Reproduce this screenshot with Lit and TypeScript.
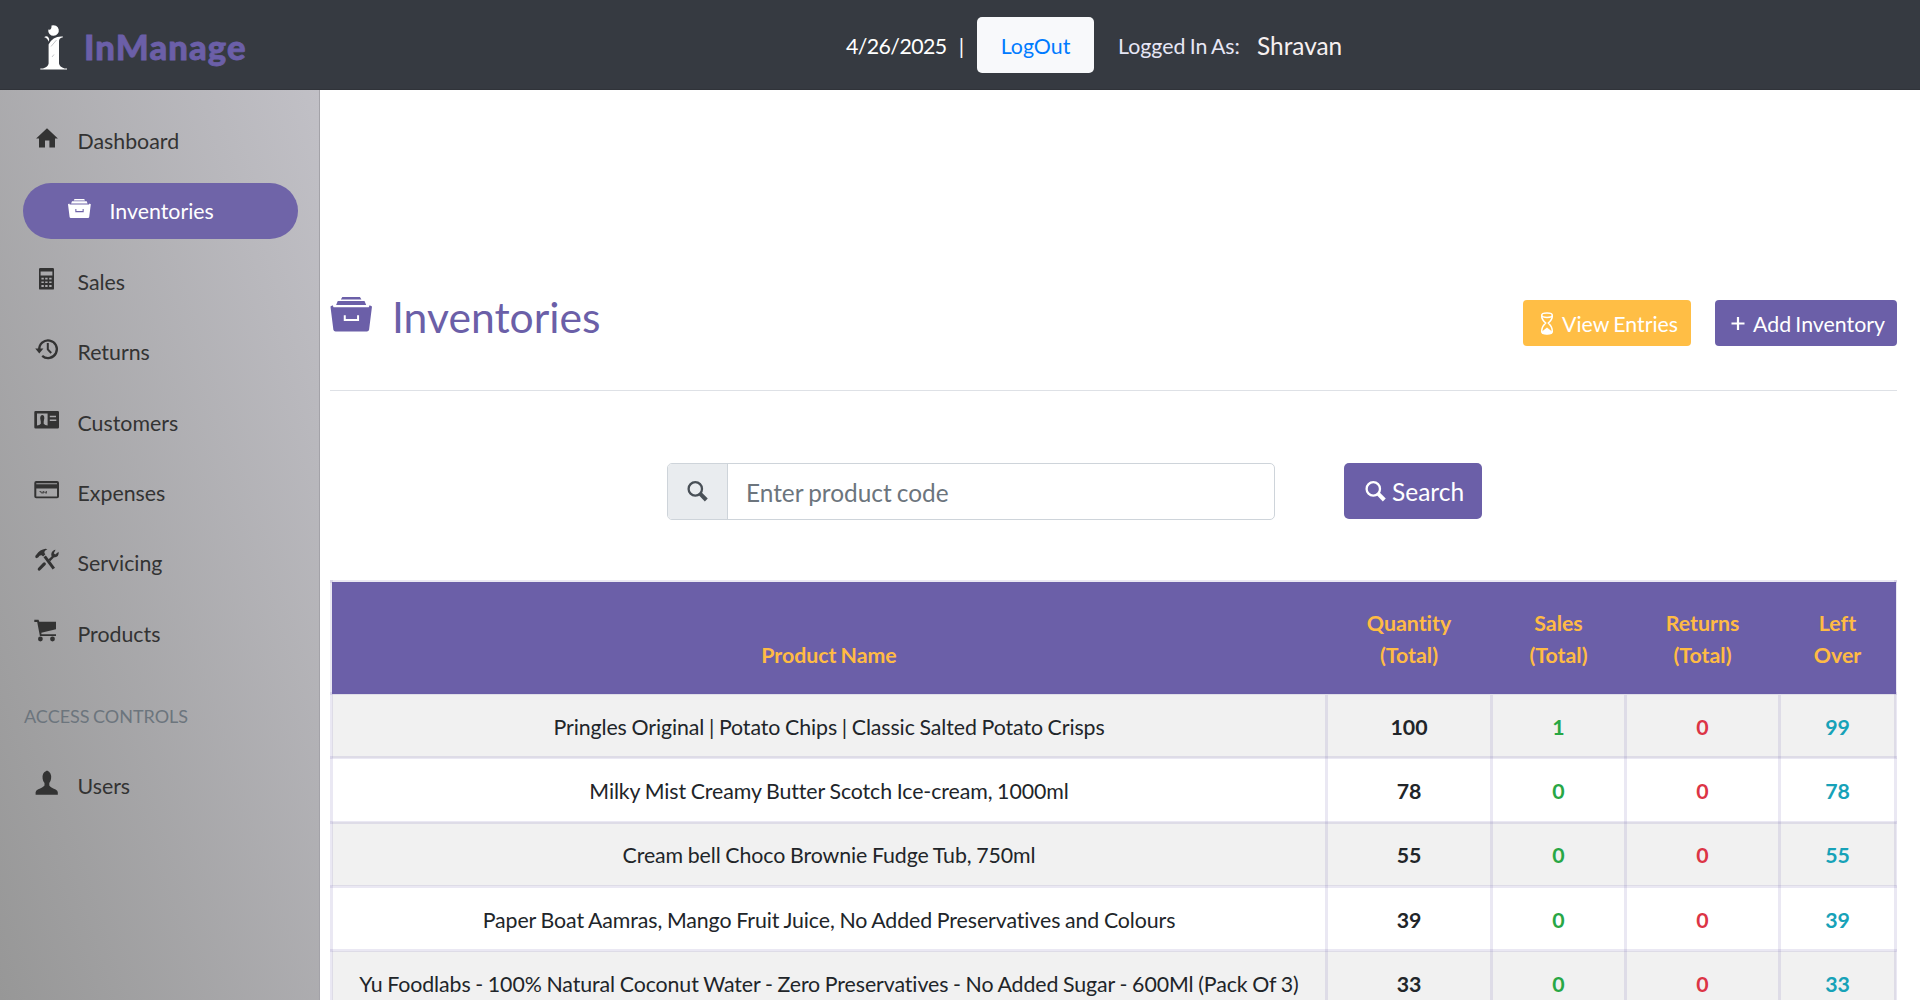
import { LitElement, html, svg, css, type TemplateResult } from "lit";
import { customElement, property } from "lit/decorators.js";

const icons: Record<string, TemplateResult> = {
  home: svg`<path d="M14 5.2 24.9 15.6H22V24.4H16.4V17.4H12V24.4H6V15.6H3.1Z"/>`,
  basket: svg`<path d="M9.5 6H19.2L20 7.4H8.7ZM7 8.3H21.7L22.6 10.4H6.1ZM3 11.3 4.2 10.5 4.7 11.6H24L24.5 10.5 25.8 11.3 24.2 24Q24 25 23 25H5.8Q4.8 25 4.6 24ZM10.3 16V19.2H18.7V16H17.6V18.1H11.4V16Z" fill-rule="evenodd"/>`,
  calc: svg`<path fill-rule="evenodd" d="M7.2 4H19.8Q21 4 21 5.2V24.4Q21 25.6 19.8 25.6H7.2Q6 25.6 6 24.4V5.2Q6 4 7.2 4ZM7.6 7.6V11.4H19.4V7.6ZM8.4 13.8V15.4H10.8V13.8ZM12.2 13.8V15.4H14.6V13.8ZM16.2 13.8V15.4H18.6V13.8ZM8.4 17.4V19H10.8V17.4ZM12.2 17.4V19H14.6V17.4ZM16.2 17.4V19H18.6V17.4ZM8.4 21V23H10.8V21ZM12.2 21V23H14.6V21ZM16.2 21V23H18.6V21Z"/>`,
  history: svg`<path fill="none" stroke="currentColor" stroke-width="2.3" d="M6.3 16A8.8 8.8 0 1 1 9.2 21.8"/><path d="M2.2 14.6H10.4L6.3 19.4Z"/><path fill="none" stroke="currentColor" stroke-width="2" d="M14.8 9V15.4L18.2 19"/>`,
  idcard: svg`<path fill-rule="evenodd" d="M2.5 6H24.8Q26 6 26 7.2V22.3Q26 23.5 24.8 23.5H2.5Q1.3 23.5 1.3 22.3V7.2Q1.3 6 2.5 6ZM4 8.6V20.6Q6.600 20.400 7.800 18.800L7.800 16.800Q6.400 13 7.600 11 9.300 9 11 11 12 13 10.700 16.800V18.800Q11.800 20.400 14.600 20.600V8.600ZM16.800 10.800V12.200H23V10.800ZM16.800 14.600V16H23.300V14.600Z"/>`,
  card: svg`<path fill-rule="evenodd" d="M3.200 6H24Q26 6 26 8V21.500Q26 23.300 24 23.300H3.200Q1.300 23.300 1.300 21.500V8Q1.300 6 3.200 6ZM3.300 8.200V9.200H24V8.200ZM3.300 13.400V21.500H24V13.400Z"/><path d="M6 16H8L9 17.500 10 16H11L12 17.500 13 16H14V18.400H12.500L11.500 17.400 10.500 18.400H8.500L7.500 17.400Z" opacity=".75"/>`,
  tools: svg`<path d="M2.200 12.200Q2 10.500 3.500 9.400 6.800 4.600 12.600 3.700L14.400 4.300Q11.200 5.600 11.400 8L12.400 9.200 10.200 11.600 8.600 10.200Q6.600 9.800 5.400 12.200L3.600 13.200Z"/><path d="M11.700 11.300 20.800 23.600" stroke="currentColor" stroke-width="3"/><path d="M11.300 18.900 6.300 24" stroke="currentColor" stroke-width="3.200" stroke-linecap="round"/><path d="M15.300 14.600 18.600 11.500Q17.200 7.400 21.200 5L22.600 4.800 20.800 8.200 22.200 9.600 25.600 6.800Q26.400 12.200 20.800 12.600L17.300 16.200Z"/>`,
  cart: svg`<path d="M1.300 3.700H5.500L6.300 5.700H23V13.200L8.300 16.800 8.500 18.200H23V20H6.900L4.200 6H1.300Z"/><circle cx="7.400" cy="23" r="2.400"/><circle cx="19.500" cy="23" r="2.400"/>`,
  user: svg`<path d="M14 2.500Q18.800 4.500 18.100 10.500 17.800 13.300 16.300 15V17.600Q17.500 19.800 22.600 21.400 24.700 22.300 24.800 24.200V26.700H2.600V24.200Q2.700 22.300 4.800 21.400 9.900 19.800 11.500 17.600V15Q9.800 13 9.600 10.500 9.100 4.500 12.800 3.300Z"/>`,
  search: svg`<circle cx="11.300" cy="10.900" r="6.700" fill="none" stroke="currentColor" stroke-width="2.300"/><path d="M15.800 15.400 22.300 22" stroke="currentColor" stroke-width="4"/>`,
  hourglass: svg`<g fill="none" stroke="currentColor" stroke-width="1.500"><ellipse cx="14" cy="6.200" rx="5.300" ry="2.200"/><path d="M8.700 6.500Q8.500 10.500 12.700 14 8.500 18 8.700 22.500 8.700 25 14 25 19.300 25 19.300 22.500 19.500 18 15.300 14 19.500 10.500 19.300 6.500"/></g><path d="M14 18.500 19 22.500V24.500Q14 26 9 24.500V22.500Z"/>`,
  plus: svg`<path d="M12.900 8H15.100V13.400H20.500V15.600H15.100V21H12.900V15.600H7.500V13.400H12.900Z"/>`,
};

const glyph = (name: string, cls = "icon") =>
  html`<svg class=${cls} viewBox="0 0 28 28" fill="currentColor">${icons[name]}</svg>`;

@customElement("nav-item")
class NavItem extends LitElement {
  @property() icon = "";
  @property() label = "";
  @property({ type: Boolean, reflect: true }) active = false;
  static styles = css`
    :host { display: flex; align-items: center; height: 56px; margin: 0 21px 14.400px 23px; padding-left: 10px; box-sizing: border-box; border-radius: 28px; color: #333; font-size: 21.333px; line-height: 32px; }
    :host([active]) { background: #6f64a8; color: #fff; padding-left: 42px; }
    .icon { width: 28px; height: 28px; margin: 0 16.500px 8px 0; flex: none; }
  `;
  render() {
    return html`${glyph(this.icon)}<span>${this.label}</span>`;
  }
}

@customElement("app-root")
class AppRoot extends LitElement {
  private menu = [
    ["home", "Dashboard"], ["basket", "Inventories"], ["calc", "Sales"], ["history", "Returns"],
    ["idcard", "Customers"], ["card", "Expenses"], ["tools", "Servicing"], ["cart", "Products"],
  ];
  private rows: [string, number, number, number, number][] = [
    ["Pringles Original | Potato Chips | Classic Salted Potato Crisps", 100, 1, 0, 99],
    ["Milky Mist Creamy Butter Scotch Ice-cream, 1000ml", 78, 0, 0, 78],
    ["Cream bell Choco Brownie Fudge Tub, 750ml", 55, 0, 0, 55],
    ["Paper Boat Aamras, Mango Fruit Juice, No Added Preservatives and Colours", 39, 0, 0, 39],
    ["Yu Foodlabs - 100% Natural Coconut Water - Zero Preservatives - No Added Sugar - 600Ml (Pack Of 3)", 33, 0, 0, 33],
  ];

  static styles = css`
    :host { display: flex; flex-direction: column; height: 1000px; overflow: hidden; background: #fff; color: #212529; font: 21.333px/32px Lato, "Liberation Sans", sans-serif; font-variant-ligatures: none; word-spacing: -1.200px; }
    * { box-sizing: border-box; }
    .navbar { display: flex; align-items: center; height: 90px; flex: none; background: #363a41; border-bottom: 1px solid #303339; color: #fff; }
    .brand { display: flex; align-items: center; width: 846px; padding: 4px 0 0 38px; }
    .logo { width: 32px; height: 50px; }
    .name { margin-left: 14px; font-family: "Lato Black", Lato, sans-serif; font-size: 34.667px; font-weight: 900; letter-spacing: 1.100px; color: #6b5fa8; -webkit-text-stroke: 0.800px #6b5fa8; }
    .session { display: flex; align-items: center; padding-top: 1px; }
    .session span { padding-top: 1px; }
    .date { width: 100px; letter-spacing: -0.600px; }
    .bar { width: 31px; text-align: center; }
    .logout { height: 56px; width: 117px; border-radius: 5px; background: #f8f9fb; color: #007bff; display: flex; align-items: center; justify-content: center; padding-top: 1px; }
    .as { margin-left: 24px; color: #e6e6f5; width: 139px; }
    .who { font-size: 24.400px; color: #f6f0f0; }
    .body { display: flex; flex: 1; min-height: 0; }
    .sidebar { width: 320px; flex: none; padding-top: 23px; border-right: 1px solid #a3a2a8; background: linear-gradient(72deg, #979797, #c1c0c6); }
    .section { margin: 38.300px 0 0 24px; height: 58px; line-height: 32px; font-size: 18px; color: #6c757d; }
    .main { flex: 1; padding: 0 23px 0 10px; min-width: 0; }
    .heading { display: flex; height: 301px; border-bottom: 1px solid #dee1e6; margin-bottom: 72px; padding-top: 201px; align-items: flex-start; }
    .big { width: 51px; height: 51px; margin: -5px 16px 0 -5px; color: #6b5fa8; }
    h1 { margin: 0; font-size: 42.667px; font-weight: 400; line-height: 52px; color: #6b5fa8; flex: 1; }
    .btn { display: flex; align-items: center; height: 46px; margin-top: 9px; padding-top: 2px; border-radius: 4px; color: #fff; }
    .btn .icon { width: 28px; height: 28px; margin-bottom: 3px; }
    .view { width: 168px; background: #ffbe45; padding-left: 10px; margin-right: 24px; }
    .view span, .add span { margin-left: 1px; }
    .add { width: 182px; background: #6b5fa8; padding-left: 9px; }
    .finder { display: flex; margin-left: 337px; height: 57px; margin-bottom: 60px; }
    .field { display: flex; width: 608px; border: 1px solid #ced4da; border-radius: 5px; overflow: hidden; margin-right: 69px; font-size: 24.400px; color: #6c757d; }
    .addon { width: 60px; border-right: 1px solid #ced4da; background: #e9ecef; display: flex; align-items: center; justify-content: center; color: #495057; }
    .addon .icon { width: 28px; height: 28px; margin-left: 1px; }
    .hint { padding-left: 18px; line-height: 57px; }
    .search { display: flex; align-items: center; width: 138px; height: 56px; border-radius: 5px; background: #6b5fa8; color: #fff; font-size: 24.500px; padding: 2px 0 0 18px; }
    .search .icon { width: 28px; height: 28px; margin: 0 2px 0 0; }
    table { border-collapse: collapse; table-layout: fixed; width: 1567px; text-align: center; }
    th, td { border: 3px solid rgba(107, 95, 168, 0.14); padding: 0; }
    thead tr { height: 112px; background: #6b5fa8; color: #ffbb44; }
    th { vertical-align: bottom; padding-bottom: 21px; font-weight: 700; }
    th + th { border-left-color: transparent; }
    th:not(:last-child) { border-right-color: transparent; }
    tbody tr { height: 64.333px; }
    tbody tr:nth-child(odd) { background: #f1f1f1; }
    td { padding-top: 2px; }
    td:first-child { word-spacing: -0.650px; letter-spacing: -0.090px; }
    td + td { font-weight: 700; }
    .c1 { width: 995px; } .c2 { width: 165px; } .c3 { width: 134px; } .c4 { width: 154px; } .c5 { width: 116px; }
    .green { color: #28a745; } .red { color: #dc3545; } .teal { color: #17a2b8; }
  `;

  render() {
    return html`
      <header class="navbar">
        <div class="brand">
          <svg class="logo" viewBox="0 0 32 50" fill="#fff">
            <path d="M13.500 3.600A5.300 5.300 0 1 1 10.300 7.600Q13.800 8.500 13.500 3.600Z"/>
            <path d="M6.200 15.200Q7.800 13.600 10 14.700 11.700 16.200 10.900 19.800 9.500 16 6.200 15.200ZM25 15.200 24.800 14.600Q15 13.800 10.600 22.500V41.500Q10.200 45 5 46.400H2.300V47.600H29V46.400H26.500Q21.500 45 21 41.500V19Q21.200 15.600 25 15.200Z"/>
            <path d="M13 24.500 18.500 18M14 35 16 32.500" stroke="#9a9da2" stroke-width=".6"/>
          </svg>
          <span class="name">InManage</span>
        </div>
        <div class="session">
          <span class="date">4/26/2025</span><span class="bar">|</span>
          <a class="logout">LogOut</a>
          <span class="as">Logged In As:</span><span class="who">Shravan</span>
        </div>
      </header>
      <div class="body">
        <nav class="sidebar">
          ${this.menu.map(([icon, label]) => html`<nav-item .icon=${icon} .label=${label} ?active=${label === "Inventories"}></nav-item>`)}
          <div class="section">ACCESS CONTROLS</div>
          <nav-item icon="user" label="Users"></nav-item>
        </nav>
        <main class="main">
          <div class="heading">
            ${glyph("basket", "big")}
            <h1>Inventories</h1>
            <div class="btn view">${glyph("hourglass")}<span>View Entries</span></div>
            <div class="btn add">${glyph("plus")}<span>Add Inventory</span></div>
          </div>
          <div class="finder">
            <div class="field"><span class="addon">${glyph("search")}</span><span class="hint">Enter product code</span></div>
            <div class="search">${glyph("search")}<span>Search</span></div>
          </div>
          <table>
            <colgroup><col class="c1" /><col class="c2" /><col class="c3" /><col class="c4" /><col class="c5" /></colgroup>
            <thead>
              <tr><th>Product Name</th><th>Quantity<br />(Total)</th><th>Sales<br />(Total)</th><th>Returns<br />(Total)</th><th>Left<br />Over</th></tr>
            </thead>
            <tbody>
              ${this.rows.map(([name, qty, sales, returns, left]) => html`<tr><td>${name}</td><td>${qty}</td><td class="green">${sales}</td><td class="red">${returns}</td><td class="teal">${left}</td></tr>`)}
            </tbody>
          </table>
        </main>
      </div>
    `;
  }
}
